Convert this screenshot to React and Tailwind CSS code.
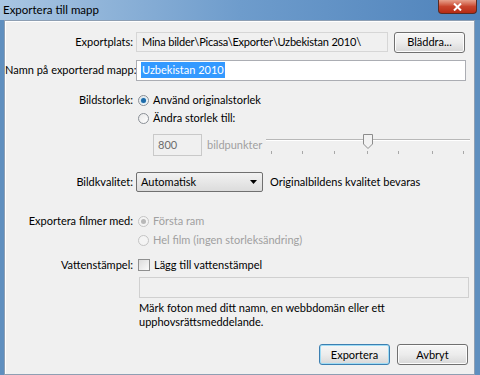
import React from "react";

function Radio({ checked, disabled }) {
  return (
    <span
      className={
        "inline-flex h-[11px] w-[11px] shrink-0 items-center justify-center rounded-full border " +
        (disabled
          ? "border-[#c4c4c4] bg-[#f4f4f4]"
          : "border-[#8a8f96] bg-gradient-to-br from-[#e8e8e8] to-[#ffffff]")
      }
    >
      {checked ? (
        <span
          className={
            "h-[5px] w-[5px] rounded-full " +
            (disabled ? "bg-[#b8b8b8]" : "bg-[#1d6aa8] shadow-[0_0_2px_#6fc0f0]")
          }
        />
      ) : null}
    </span>
  );
}

function Btn({ children, focused }) {
  return (
    <div
      className={
        "flex h-[21px] w-[71px] items-center justify-center rounded-[3px] border bg-gradient-to-b from-[#f6f6f6] via-[#ececec] to-[#d8d8d8] text-black " +
        (focused ? "border-[#3c7fb1] shadow-[inset_0_0_0_1px_#9fdcf5]" : "border-[#707070] shadow-[inset_0_0_0_1px_#fcfcfc]")
      }
    >
      {children}
    </div>
  );
}

export default function App() {
  const ticks = [271, 302, 334, 367, 398, 432, 463];
  const base = 261;
  return (
    <div
      className="flex h-[375px] w-[480px] flex-col overflow-hidden bg-[#5f8fbf] whitespace-nowrap"
      style={{ fontFamily: 'Lato, "Open Sans", sans-serif' }}
    >
      {/* title bar */}
      <div className="relative h-[20px] shrink-0 bg-gradient-to-r from-[#a9c6e2] via-[#6e9ccc] to-[#4f83bb]">
        <div className="pl-[3px] pt-[2px] text-[11.5px] leading-[16px] text-black">Exportera till mapp</div>
        <div className="absolute right-[3px] top-0 flex h-[14px] w-[39px] items-center justify-center rounded-b-[4px] border border-t-0 border-[#5a2a22] bg-gradient-to-b from-[#e6a08c] via-[#c8442c] to-[#b62a14]">
          <svg width="9" height="8" viewBox="0 0 9 8">
            <path d="M1 0.5 L8 7.5 M8 0.5 L1 7.5" stroke="#fff" strokeWidth="2" />
          </svg>
        </div>
      </div>

      {/* content */}
      <div className="ml-[4px] mr-[5px] flex flex-1 flex-col border border-[#8e9fb3] bg-[#f0f0f0] text-[11px] leading-[16px] text-black shadow-[inset_1px_1px_0_#ffffff]">
        {/* Exportplats */}
        <div className="mt-[11px] flex h-[20px] items-center">
          <div className="w-[131px] shrink-0 pr-[3px] text-right">Exportplats:</div>
          <div className="flex h-[20px] w-[252px] shrink-0 items-center border border-[#d6d6d6] bg-[#f0f0f0] px-[5px] tracking-[-0.2px]">
            Mina bilder\Picasa\Exporter\Uzbekistan 2010\
          </div>
          <div className="ml-[6px]">
            <Btn>Bläddra...</Btn>
          </div>
        </div>

        {/* Namn */}
        <div className="mt-[8px] flex h-[20px] items-center">
          <div className="w-[131px] shrink-0 pr-[3px] text-right">Namn på exporterad mapp:</div>
          <div className="flex h-[21px] w-[330px] items-center border border-[#abadb3] bg-white px-[4px]">
            <span className="bg-[#3399ff] px-[1px] text-white">Uzbekistan 2010</span>
          </div>
        </div>

        {/* Bildstorlek */}
        <div className="mt-[11px] flex h-[18px] items-center">
          <div className="w-[131px] pr-[3px] text-right">Bildstorlek:</div>
          <div className="flex items-center gap-[4px] pl-[2px]">
            <Radio checked />
            <span>Använd originalstorlek</span>
          </div>
        </div>
        <div className="flex h-[18px] items-center">
          <div className="w-[131px]" />
          <div className="flex items-center gap-[4px] pl-[2px]">
            <Radio />
            <span>Ändra storlek till:</span>
          </div>
        </div>

        {/* 800 + slider */}
        <div className="mt-[7px] flex h-[22px] items-center">
          <div className="w-[148px] shrink-0" />
          <div className="flex h-[22px] w-[49px] shrink-0 items-center border border-[#c9c9c9] bg-[#f0f0f0] px-[4px] text-[#6d6d6d]">800</div>
          <span className="ml-[5px] w-[54px] shrink-0 text-[#a0a0a0]">bildpunkter</span>
          <div className="relative h-[22px] flex-1">
            <div className="absolute left-[5px] right-[4px] top-[5px] h-[2px] border-t border-b border-t-[#b8b8b8] border-b-[#ffffff]" />
            <svg className="absolute top-0" style={{ left: 363 - base }} width="10" height="15" viewBox="0 0 10 15">
              <path d="M0.5 0.5 H9.5 V10 L5 14.5 L0.5 10 Z" fill="#f2f2f2" stroke="#8c8c8c" />
            </svg>
            {ticks.map((t) => (
              <div key={t} className="absolute top-[17px] h-[3px] w-px bg-[#a8a8a8]" style={{ left: t - base }} />
            ))}
          </div>
        </div>

        {/* Bildkvalitet */}
        <div className="mt-[16px] flex h-[20px] items-center">
          <div className="w-[131px] pr-[3px] text-right">Bildkvalitet:</div>
          <div className="flex h-[20px] w-[127px] items-center justify-between rounded-[2px] border border-[#707070] bg-gradient-to-b from-[#f2f2f2] to-[#dcdcdc] pl-[4px] pr-[5px]">
            <span>Automatisk</span>
            <svg width="7" height="4" viewBox="0 0 7 4">
              <path d="M0 0 H7 L3.5 4 Z" fill="#000" />
            </svg>
          </div>
          <span className="ml-[7px]">Originalbildens kvalitet bevaras</span>
        </div>

        {/* Exportera filmer */}
        <div className="mt-[20px] flex h-[18px] items-center">
          <div className="w-[131px] pr-[3px] text-right">Exportera filmer med:</div>
          <div className="flex items-center gap-[4px] pl-[2px] text-[#a0a0a0]">
            <Radio checked disabled />
            <span>Första ram</span>
          </div>
        </div>
        <div className="mt-[1px] flex h-[18px] items-center">
          <div className="w-[131px]" />
          <div className="flex items-center gap-[4px] pl-[2px] text-[#a0a0a0]">
            <Radio disabled />
            <span>Hel film (ingen storleksändring)</span>
          </div>
        </div>

        {/* Vattenstämpel */}
        <div className="mt-[7px] flex h-[18px] items-center">
          <div className="w-[131px] pr-[3px] text-right">Vattenstämpel:</div>
          <div className="flex items-center gap-[4px] pl-[2px]">
            <span className="h-[12px] w-[12px] border border-[#8e8f8f] bg-gradient-to-br from-[#dcdcdc] to-[#fbfbfb]" />
            <span>Lägg till vattenstämpel</span>
          </div>
        </div>
        <div className="mt-[3px] flex h-[21px]">
          <div className="w-[134px]" />
          <div className="w-[330px] border border-[#d0d0d0] bg-[#f0f0f0]" />
        </div>

        {/* hint */}
        <div className="mt-[3px] flex">
          <div className="w-[134px]" />
          <div className="leading-[14px]">
            Märk foton med ditt namn, en webbdomän eller ett
            <br />
            upphovsrättsmeddelande.
          </div>
        </div>

        {/* buttons */}
        <div className="mt-[15px] flex justify-end gap-[7px] pr-[6px]">
          <Btn focused>Exportera</Btn>
          <Btn>Avbryt</Btn>
        </div>
      </div>
    </div>
  );
}
